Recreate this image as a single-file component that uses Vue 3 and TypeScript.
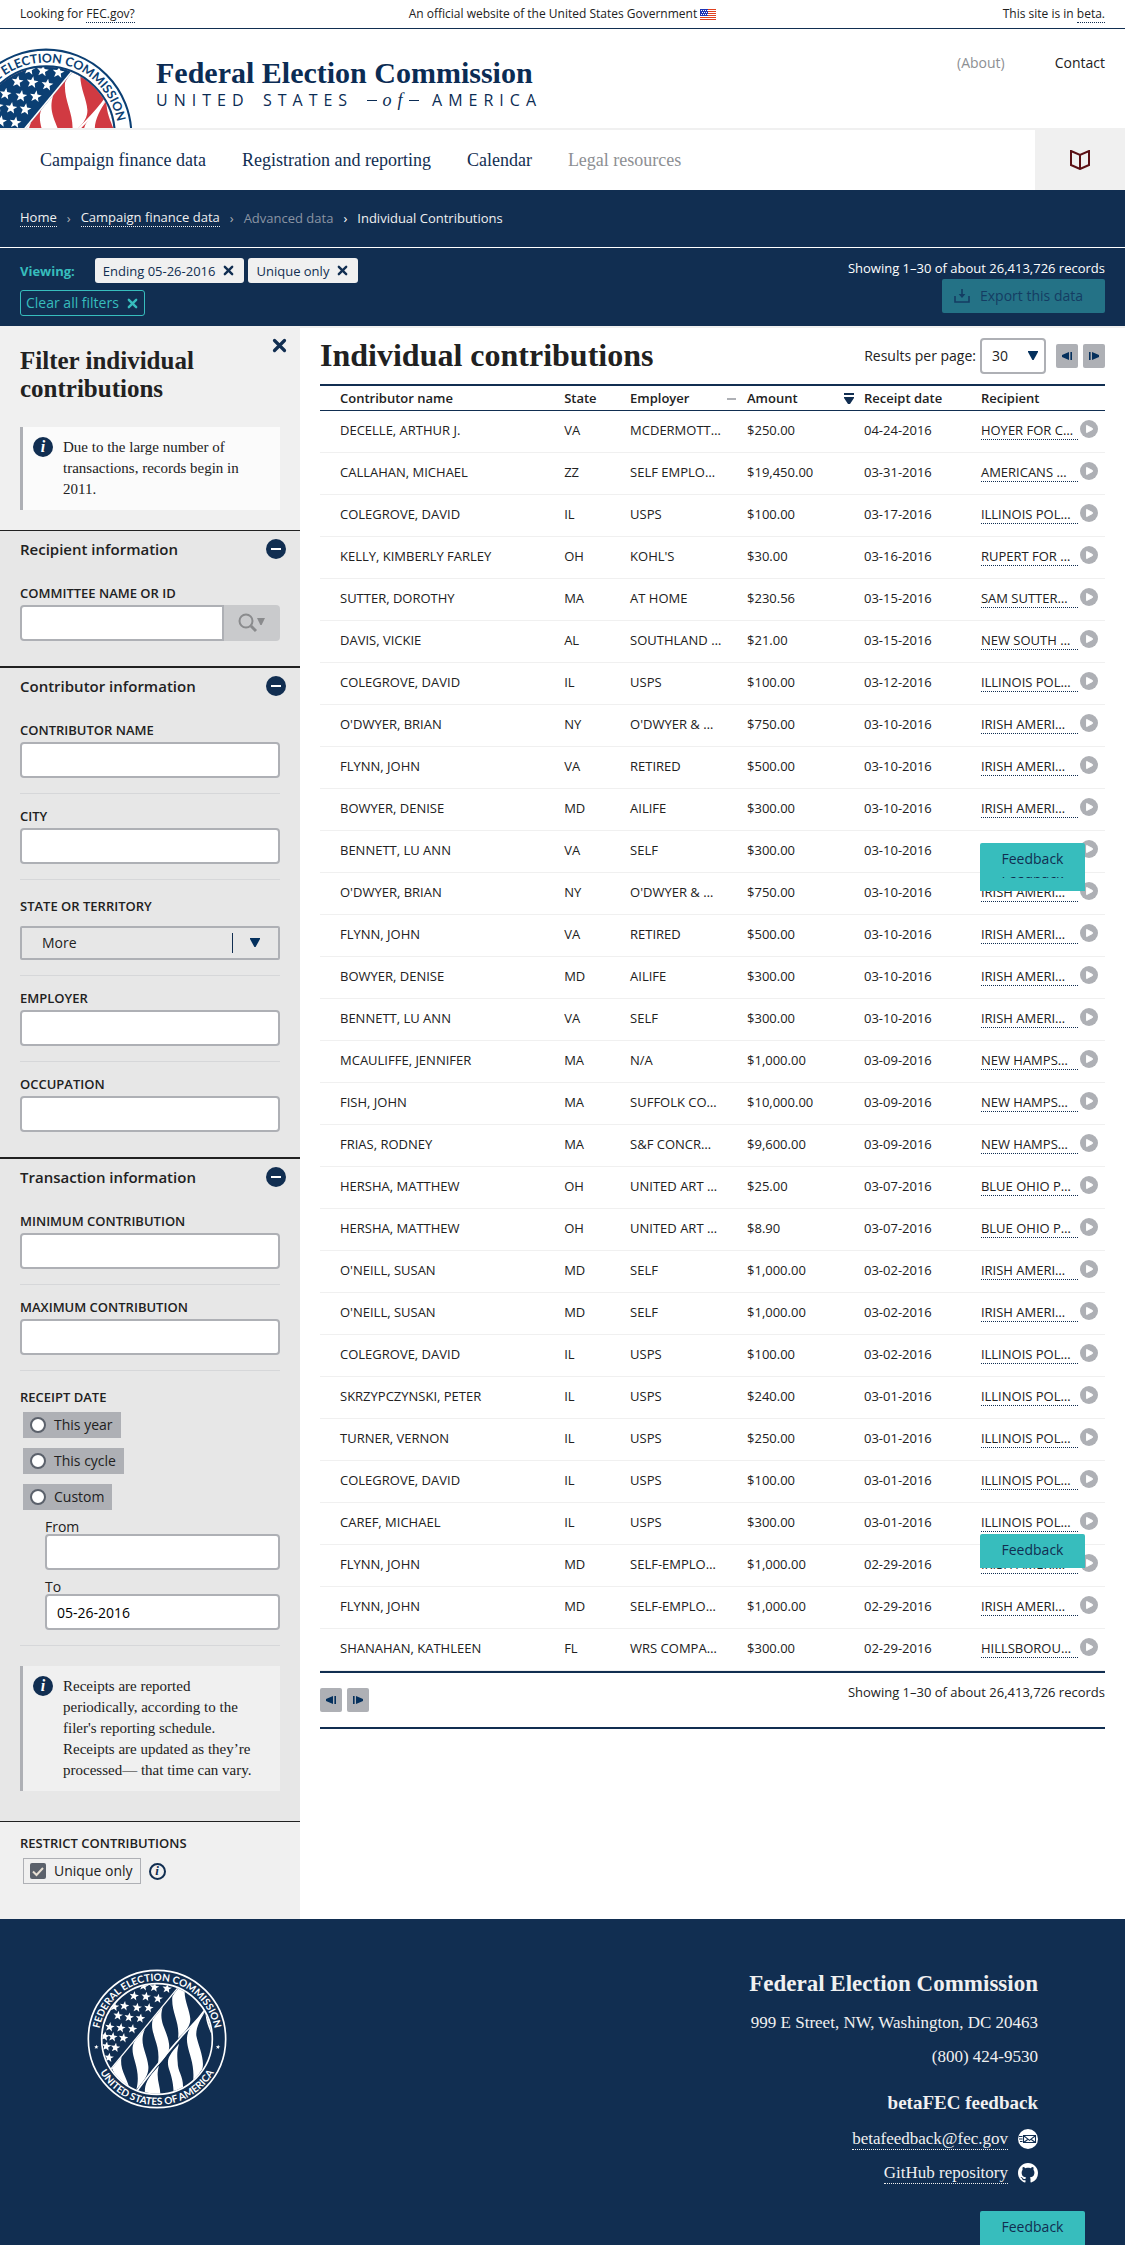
<script setup lang="ts">
import { ref } from 'vue'

interface Receipt {
  name: string
  state: string
  employer: string
  amount: string
  date: string
  recipient: string
}

const raw: string[][] = [
  ['DECELLE, ARTHUR J.', 'VA', 'MCDERMOTT…', '$250.00', '04-24-2016', 'HOYER FOR C…'],
  ['CALLAHAN, MICHAEL', 'ZZ', 'SELF EMPLO…', '$19,450.00', '03-31-2016', 'AMERICANS …'],
  ['COLEGROVE, DAVID', 'IL', 'USPS', '$100.00', '03-17-2016', 'ILLINOIS POL…'],
  ['KELLY, KIMBERLY FARLEY', 'OH', "KOHL'S", '$30.00', '03-16-2016', 'RUPERT FOR …'],
  ['SUTTER, DOROTHY', 'MA', 'AT HOME', '$230.56', '03-15-2016', 'SAM SUTTER…'],
  ['DAVIS, VICKIE', 'AL', 'SOUTHLAND …', '$21.00', '03-15-2016', 'NEW SOUTH …'],
  ['COLEGROVE, DAVID', 'IL', 'USPS', '$100.00', '03-12-2016', 'ILLINOIS POL…'],
  ["O'DWYER, BRIAN", 'NY', "O'DWYER & …", '$750.00', '03-10-2016', 'IRISH AMERI…'],
  ['FLYNN, JOHN', 'VA', 'RETIRED', '$500.00', '03-10-2016', 'IRISH AMERI…'],
  ['BOWYER, DENISE', 'MD', 'AILIFE', '$300.00', '03-10-2016', 'IRISH AMERI…'],
  ['BENNETT, LU ANN', 'VA', 'SELF', '$300.00', '03-10-2016', 'IRISH AMERI…'],
  ["O'DWYER, BRIAN", 'NY', "O'DWYER & …", '$750.00', '03-10-2016', 'IRISH AMERI…'],
  ['FLYNN, JOHN', 'VA', 'RETIRED', '$500.00', '03-10-2016', 'IRISH AMERI…'],
  ['BOWYER, DENISE', 'MD', 'AILIFE', '$300.00', '03-10-2016', 'IRISH AMERI…'],
  ['BENNETT, LU ANN', 'VA', 'SELF', '$300.00', '03-10-2016', 'IRISH AMERI…'],
  ['MCAULIFFE, JENNIFER', 'MA', 'N/A', '$1,000.00', '03-09-2016', 'NEW HAMPS…'],
  ['FISH, JOHN', 'MA', 'SUFFOLK CO…', '$10,000.00', '03-09-2016', 'NEW HAMPS…'],
  ['FRIAS, RODNEY', 'MA', 'S&F CONCR…', '$9,600.00', '03-09-2016', 'NEW HAMPS…'],
  ['HERSHA, MATTHEW', 'OH', 'UNITED ART …', '$25.00', '03-07-2016', 'BLUE OHIO P…'],
  ['HERSHA, MATTHEW', 'OH', 'UNITED ART …', '$8.90', '03-07-2016', 'BLUE OHIO P…'],
  ["O'NEILL, SUSAN", 'MD', 'SELF', '$1,000.00', '03-02-2016', 'IRISH AMERI…'],
  ["O'NEILL, SUSAN", 'MD', 'SELF', '$1,000.00', '03-02-2016', 'IRISH AMERI…'],
  ['COLEGROVE, DAVID', 'IL', 'USPS', '$100.00', '03-02-2016', 'ILLINOIS POL…'],
  ['SKRZYPCZYNSKI, PETER', 'IL', 'USPS', '$240.00', '03-01-2016', 'ILLINOIS POL…'],
  ['TURNER, VERNON', 'IL', 'USPS', '$250.00', '03-01-2016', 'ILLINOIS POL…'],
  ['COLEGROVE, DAVID', 'IL', 'USPS', '$100.00', '03-01-2016', 'ILLINOIS POL…'],
  ['CAREF, MICHAEL', 'IL', 'USPS', '$300.00', '03-01-2016', 'ILLINOIS POL…'],
  ['FLYNN, JOHN', 'MD', 'SELF-EMPLO…', '$1,000.00', '02-29-2016', 'IRISH AMERI…'],
  ['FLYNN, JOHN', 'MD', 'SELF-EMPLO…', '$1,000.00', '02-29-2016', 'IRISH AMERI…'],
  ['SHANAHAN, KATHLEEN', 'FL', 'WRS COMPA…', '$300.00', '02-29-2016', 'HILLSBOROU…'],
]

const receipts: Receipt[] = raw.map(([name, state, employer, amount, date, recipient]) => ({
  name, state, employer, amount, date, recipient,
}))

const activeFilters = ['Ending 05-26-2016', 'Unique only']
const periods = ['This year', 'This cycle', 'Custom']
const period = ref('')
const perPage = ref('30')
const dateTo = ref('05-26-2016')
const uniqueOnly = ref(true)

const starCentres: [number, number][] = [
  [-40, -159], [-8, -155], [30, -151], [-69, -129], [-33, -127], [3, -121],
  [-98, -99], [-60, -94], [-25, -93], [-117, -70], [-84, -65], [-50, -62],
  [-142, -36], [-109, -33], [-74, -30], [-133, -6], [-101, -3], [-157, -8],
  [-125, 26], [-152, 22], [-144, 56], [-128, -97],
]

function star(cx: number, cy: number, r: number): string {
  return Array.from({ length: 10 }, (_, i) => {
    const a = (Math.PI / 5) * i - Math.PI / 2 + 0.15
    const k = i % 2 ? r * 0.42 : r
    return `${(cx + k * Math.cos(a)).toFixed(1)},${(cy + k * Math.sin(a)).toFixed(1)}`
  }).join(' ')
}

const seals = [
  { id: 'head', ink: '#0b3f73', field: '#d13a42', canton: '#0b3f73', paper: '#ffffff' },
  { id: 'foot', ink: '#ffffff', field: '#112e51', canton: '#112e51', paper: '#112e51' },
]
</script>

<template>
  <div class="page">
    <!-- artwork shared by several parts of the page -->
    <svg class="defs" aria-hidden="true">
      <defs>
        <clipPath id="disc"><circle r="164" /></clipPath>
        <path id="arc-top" d="M-175 0A175 175 0 1 1 175 0" />
        <path id="arc-bottom" d="M-198 0A198 198 0 0 0 198 0" />
      </defs>
      <symbol v-for="s in seals" :id="`seal-${s.id}`" :key="s.id" viewBox="-210 -210 420 420">
        <circle r="206" :fill="s.paper" :stroke="s.ink" stroke-width="5" />
        <g clip-path="url(#disc)">
          <rect x="-170" y="-170" width="340" height="340" :fill="s.field" />
          <g fill="#fff">
            <path d="M46 -127Q58 -150 66 -160L84 -156C78 -120 98 -90 100 -60C100 -36 84 -22 63 -2C70 -50 42 -80 46 -127Z" />
            <path d="M18 -98C-24 -62 -18 -40 -6 0C2 24 8 46 2 80C26 54 40 40 36 14C30 -30 2 -50 18 -98Z" />
            <path d="M-36 -30C-80 10 -78 28 -66 68C-58 96 -54 120 -62 152C-36 122 -24 106 -26 82C-30 40 -56 14 -36 -30Z" />
            <path d="M-106 50L-136 86L-112 140L-82 150C-92 110 -114 90 -106 50Z" />
            <path d="M146 -84C96 -36 84 -20 92 20C98 50 114 80 108 130L136 90C144 60 124 20 118 -10C116 -34 130 -60 146 -84Z" />
            <path d="M66 14C30 54 28 66 38 96C46 120 50 140 50 170L78 150C80 110 62 100 62 70C60 46 60 36 66 14Z" />
            <path d="M6 80C-36 124 -38 140 -36 172L10 172C12 140 -6 120 6 80Z" />
            <path d="M124 -110L146 -86C144 -40 168 -20 168 10L172 -60L140 -130Z" />
          </g>
          <path d="M146 -90C110 -40 90 -30 60 8C20 54 -20 100 -60 156" fill="none" stroke="#fff" stroke-width="5" />
          <path d="M68 -157L-140 94L-200 94L-200 -200L68 -200Z" :fill="s.canton" />
          <path d="M68 -160L-140 92" stroke="#fff" stroke-width="4" />
          <polygon v-for="([x, y], i) in starCentres" :key="i" :points="star(x, y, 15)" fill="#fff" />
        </g>
        <circle r="166" fill="none" :stroke="s.ink" stroke-width="5" />
        <polygon :points="star(-182, 24, 7)" :fill="s.ink" />
        <polygon :points="star(183, 24, 7)" :fill="s.ink" />
      </symbol>
      <symbol id="cross" viewBox="0 0 12 12">
        <path d="M2 2L10 10M10 2L2 10" stroke="currentColor" stroke-width="2.6" stroke-linecap="round" />
      </symbol>
      <symbol id="down" viewBox="0 0 10 9"><path d="M0 0H10V1L5.6 9H4.4L0 1Z" fill="currentColor" /></symbol>
      <symbol id="prev" viewBox="0 0 10 8">
        <path d="M7 0V8L0 5V3ZM8.4 0H10V8H8.4Z" fill="currentColor" />
      </symbol>
      <symbol id="next" viewBox="0 0 10 8">
        <path d="M3 0V8L10 5V3ZM0 0H1.6V8H0Z" fill="currentColor" />
      </symbol>
    </svg>

    <div class="disclaimer">
      <span>Looking for <a href="#">FEC.gov?</a></span>
      <span class="official">
        An official website of the United States Government
        <svg class="flag" viewBox="0 0 16 11" aria-hidden="true">
          <rect width="16" height="11" fill="#fff" />
          <path d="M0 .5H16M0 2.5H16M0 4.5H16M0 6.5H16M0 8.5H16M0 10.5H16" stroke="#e0401f" />
          <rect width="8" height="7" fill="#1f35b5" />
          <path d="M1 1.5H8M2 3.5H8M1 5.5H8" stroke="#fff" stroke-dasharray="1 1" />
        </svg>
      </span>
      <span>This site is in <a href="#">beta.</a></span>
    </div>

    <header class="masthead">
      <svg class="seal" viewBox="-210 -210 420 420" aria-hidden="true">
        <use href="#seal-head" x="-210" y="-210" width="420" height="420" />
        <text><textPath href="#arc-top" startOffset="50%">FEDERAL ELECTION COMMISSION</textPath></text>
      </svg>
      <a class="wordmark" href="#">
        <span class="wordmark-name">Federal Election Commission</span>
        <span class="wordmark-sub">
          <span>UNITED</span><span>STATES</span>
          <span class="of"><i class="dash"></i><em>of</em><i class="dash"></i></span>
          <span>AMERICA</span>
        </span>
      </a>
      <nav class="utility">
        <span class="muted">(About)</span>
        <a href="#">Contact</a>
      </nav>
    </header>

    <nav class="site-nav">
      <ul>
        <li><a href="#">Campaign finance data</a></li>
        <li><a href="#">Registration and reporting</a></li>
        <li><a href="#">Calendar</a></li>
        <li class="muted">Legal resources</li>
      </ul>
      <button class="glossary" aria-label="Glossary">
        <svg viewBox="0 0 20 20" aria-hidden="true">
          <path d="M1 1L10 5L19 1V15L10 19L1 15ZM10 5V19" fill="none" stroke="#5b0f14" stroke-width="2" />
        </svg>
      </button>
    </nav>

    <nav class="crumbs">
      <a href="#">Home</a><span class="sep">›</span>
      <a href="#">Campaign finance data</a><span class="sep">›</span>
      <span class="faded">Advanced data</span><span class="sep bright">›</span>
      <span>Individual Contributions</span>
    </nav>

    <section class="viewing">
      <div class="tags">
        <div class="tag-row">
          <strong>Viewing:</strong>
          <ul>
            <li v-for="f in activeFilters" :key="f" class="tag">
              {{ f }}
              <button :aria-label="`Remove ${f}`"><svg class="x"><use href="#cross" /></svg></button>
            </li>
          </ul>
        </div>
        <button class="clear">Clear all filters <svg class="x"><use href="#cross" /></svg></button>
      </div>
      <div class="results">
        <span>Showing 1–30 of about 26,413,726 records</span>
        <button class="export">
          <svg viewBox="0 0 16 14" aria-hidden="true">
            <path d="M1 7V13H15V7" fill="none" stroke="currentColor" stroke-width="1.6" />
            <path d="M8 0V6" stroke="currentColor" stroke-width="1.6" />
            <path d="M4.6 5H11.4L8 9Z" fill="currentColor" />
          </svg>
          Export this data
        </button>
      </div>
    </section>

    <div class="body">
      <aside class="filters">
        <div class="filters-head">
          <h2>Filter individual contributions</h2>
          <button class="close" aria-label="Hide filters"><svg><use href="#cross" /></svg></button>
          <div class="note light">
            <span class="info">i</span>
            <p>Due to the large number of transactions, records begin in 2011.</p>
          </div>
        </div>

        <section class="panel first">
          <h3>Recipient information <button class="toggle" aria-label="Collapse"></button></h3>
          <div class="field">
            <label for="committee">COMMITTEE NAME OR ID</label>
            <div class="combo">
              <input id="committee" type="text" />
              <button aria-label="Search">
                <svg viewBox="0 0 28 20" aria-hidden="true">
                  <circle cx="8" cy="8" r="6.5" fill="none" stroke="#8a8b8d" stroke-width="2" />
                  <path d="M13 13L18 18" stroke="#8a8b8d" stroke-width="3" />
                  <path d="M19 5H27L23.6 12H22.4Z" fill="#8a8b8d" />
                </svg>
              </button>
            </div>
          </div>
        </section>

        <section class="panel">
          <h3>Contributor information <button class="toggle" aria-label="Collapse"></button></h3>
          <div class="field"><label for="contributor">CONTRIBUTOR NAME</label><input id="contributor" type="text" /></div>
          <div class="field"><label for="city">CITY</label><input id="city" type="text" /></div>
          <div class="field group">
            <label for="state">STATE OR TERRITORY</label>
            <div class="dropdown">
              <select id="state"><option>More</option></select>
              <svg class="arrow"><use href="#down" /></svg>
            </div>
          </div>
          <div class="field"><label for="employer">EMPLOYER</label><input id="employer" type="text" /></div>
          <div class="field"><label for="occupation">OCCUPATION</label><input id="occupation" type="text" /></div>
        </section>

        <section class="panel">
          <h3>Transaction information <button class="toggle" aria-label="Collapse"></button></h3>
          <div class="field"><label for="min">MINIMUM CONTRIBUTION</label><input id="min" type="text" /></div>
          <div class="field"><label for="max">MAXIMUM CONTRIBUTION</label><input id="max" type="text" /></div>
          <fieldset class="field group dates">
            <legend>RECEIPT DATE</legend>
            <div class="radios">
              <label v-for="p in periods" :key="p" class="chip solid">
                <input v-model="period" type="radio" name="period" :value="p" />{{ p }}
              </label>
            </div>
            <div class="range">
              <label for="from">From</label><input id="from" type="text" />
              <label for="to">To</label><input id="to" v-model="dateTo" type="text" />
            </div>
          </fieldset>
          <div class="note grey">
            <span class="info">i</span>
            <p>Receipts are reported periodically, according to the filer's reporting schedule. Receipts are updated as they’re processed— that time can vary.</p>
          </div>
        </section>

        <fieldset class="restrict">
          <legend>RESTRICT CONTRIBUTIONS</legend>
          <div class="restrict-row">
            <label class="chip">
              <span class="tick">
                <input v-model="uniqueOnly" type="checkbox" />
                <svg viewBox="0 0 16 16" aria-hidden="true"><path d="M3 8.5L6.5 12L13 5" fill="none" stroke="#e8e0d4" stroke-width="2" /></svg>
              </span>
              Unique only
            </label>
            <button class="info outline" aria-label="About unique contributions">i</button>
          </div>
        </fieldset>
      </aside>

      <main class="data">
        <div class="data-head">
          <h1>Individual contributions</h1>
          <div class="paging">
            <label for="per-page">Results per page:</label>
            <div class="per-page">
              <select id="per-page" v-model="perPage"><option>30</option><option>50</option><option>100</option></select>
              <svg class="arrow"><use href="#down" /></svg>
            </div>
            <div class="pager">
              <button aria-label="Previous page"><svg><use href="#prev" /></svg></button>
              <button aria-label="Next page"><svg><use href="#next" /></svg></button>
            </div>
          </div>
        </div>

        <table>
          <colgroup>
            <col class="c-name" /><col class="c-state" /><col class="c-mid" /><col class="c-mid" /><col class="c-mid" /><col />
          </colgroup>
          <thead>
            <tr>
              <th>Contributor name</th>
              <th>State</th>
              <th>Employer</th>
              <th><i class="unsorted"></i>Amount</th>
              <th>
                <svg class="sorted" viewBox="0 0 10 11" aria-hidden="true">
                  <path d="M0 0H10V2H0ZM0 4H10V5L6 11H4L0 5Z" fill="#112e51" />
                </svg>Receipt date
              </th>
              <th>Recipient</th>
            </tr>
          </thead>
          <tbody>
            <tr v-for="(r, i) in receipts" :key="i">
              <td>{{ r.name }}</td>
              <td>{{ r.state }}</td>
              <td>{{ r.employer }}</td>
              <td>{{ r.amount }}</td>
              <td>{{ r.date }}</td>
              <td>
                <div class="recipient">
                  <a href="#">{{ r.recipient }}</a>
                  <button aria-label="Details">
                    <svg viewBox="0 0 18 18" aria-hidden="true">
                      <circle cx="9" cy="9" r="9" fill="#aeb0b5" />
                      <path d="M6.6 5.4L12.4 8.4V9.6L6.6 12.6Z" fill="#fff" stroke="#fff" stroke-linejoin="round" />
                    </svg>
                  </button>
                </div>
              </td>
            </tr>
          </tbody>
        </table>

        <div class="data-foot">
          <div class="pager">
            <button aria-label="Previous page"><svg><use href="#prev" /></svg></button>
            <button aria-label="Next page"><svg><use href="#next" /></svg></button>
          </div>
          <span>Showing 1–30 of about 26,413,726 records</span>
        </div>
      </main>
    </div>

    <footer class="footer">
      <svg class="seal" viewBox="-210 -210 420 420" aria-hidden="true">
        <use href="#seal-foot" x="-210" y="-210" width="420" height="420" />
        <text><textPath href="#arc-top" startOffset="50%">FEDERAL ELECTION COMMISSION</textPath></text>
        <text><textPath href="#arc-bottom" startOffset="50%">UNITED STATES OF AMERICA</textPath></text>
      </svg>
      <div class="contact">
        <h2>Federal Election Commission</h2>
        <p>999 E Street, NW, Washington, DC 20463</p>
        <p>(800) 424-9530</p>
        <h3>betaFEC feedback</h3>
        <p class="with-icon">
          <a href="#">betafeedback@fec.gov</a>
          <svg viewBox="0 0 20 20" aria-hidden="true">
            <circle cx="10" cy="10" r="10" fill="#fff" />
            <path d="M5.5 6.5H17.5V13.5H5.5ZM6 7L11.5 11.4L17 7M6 13.2L10 10.2M17 13.2L13 10.2M1 7.5H4.5M1 10H4.5M2 12.5H4.5" fill="none" stroke="#112e51" stroke-width="1.1" />
          </svg>
        </p>
        <p class="with-icon">
          <a href="#">GitHub repository</a>
          <svg viewBox="0 0 16 16" aria-hidden="true">
            <path fill="#fff" d="M8 0C3.58 0 0 3.58 0 8c0 3.54 2.29 6.53 5.47 7.59.4.07.55-.17.55-.38 0-.19-.01-.82-.01-1.49-2.01.37-2.53-.49-2.69-.94-.09-.23-.48-.94-.82-1.13-.28-.15-.68-.52-.01-.53.63-.01 1.08.58 1.23.82.72 1.21 1.87.87 2.33.66.07-.52.28-.87.51-1.07-1.78-.2-3.64-.89-3.64-3.95 0-.87.31-1.59.82-2.15-.08-.2-.36-1.02.08-2.12 0 0 .67-.21 2.2.82.64-.18 1.32-.27 2-.27s1.36.09 2 .27c1.53-1.04 2.2-.82 2.2-.82.44 1.1.16 1.92.08 2.12.51.56.82 1.27.82 2.15 0 3.07-1.87 3.75-3.65 3.95.29.25.54.73.54 1.48 0 1.07-.01 1.93-.01 2.2 0 .21.15.46.55.38A8.01 8.01 0 0 0 16 8c0-4.42-3.58-8-8-8z" />
          </svg>
        </p>
      </div>
    </footer>

    <button class="feedback lower">Feedback</button>
    <button class="feedback upper">Feedback</button>
    <button class="feedback middle">Feedback</button>
    <button class="feedback docked">Feedback</button>
  </div>
</template>

<style>
body {
  margin: 0;
}
</style>

<style scoped>
.page {
  --navy: #112e51;
  --teal: #37bdbd;
  --line: #aeb0b5;
  --serif: "Liberation Serif", "Times New Roman", serif;
  position: relative;
  background: #fff;
  color: #212121;
  font-family: "Open Sans", "Noto Sans", sans-serif;
  font-size: 13px;
  line-height: 20px;
}
.page *,
.page *::before,
.page *::after {
  box-sizing: border-box;
}
.defs {
  position: absolute;
  width: 0;
  height: 0;
}
h1, h2, h3, p, ul, fieldset {
  margin: 0;
  padding: 0;
  border: 0;
  list-style: none;
}
button, input, select {
  font: inherit;
  color: inherit;
  margin: 0;
  padding: 0;
  border: 0;
  background: none;
}
button svg {
  display: block;
}
a {
  color: inherit;
  text-decoration: none;
}
fieldset {
  min-width: 0;
}
.muted {
  color: #8d8f93;
}
.seal text {
  fill: #0b3f73;
  font: 700 30px Lato, sans-serif;
  text-anchor: middle;
}
.footer .seal text {
  fill: #fff;
}

.disclaimer {
  display: flex;
  justify-content: space-between;
  height: 29px;
  padding: 4px 20px 0;
  border-bottom: 1px solid var(--navy);
  font-size: 12px;
}
.disclaimer > span {
  flex: 1;
}
.disclaimer > span:last-child {
  text-align: right;
}
.disclaimer .official {
  flex: none;
}
.disclaimer a {
  border-bottom: 1px dotted var(--navy);
}
.flag {
  width: 16px;
  height: 11px;
  vertical-align: -2px;
}

.masthead {
  display: flex;
  align-items: flex-start;
  height: 99px;
  padding-right: 20px;
  overflow: hidden;
}
.masthead .seal {
  flex: none;
  width: 174px;
  height: 174px;
  margin: 19px 23px 0 -41px;
}
.wordmark {
  width: 380px;
  padding-top: 26px;
  color: #0b2c54;
}
.wordmark-name {
  display: block;
  font: 700 30px/36px var(--serif);
  white-space: nowrap;
}
.wordmark-sub {
  display: flex;
  justify-content: space-between;
  margin-right: -6px;
  font-size: 16px;
  line-height: 18px;
  letter-spacing: 6px;
}
.of {
  display: flex;
  align-items: center;
  gap: 6px;
}
.of em {
  font: italic 18px/18px var(--serif);
  letter-spacing: 6px;
  margin-right: -6px;
}
.dash {
  width: 10px;
  height: 1px;
  background: currentColor;
}
.utility {
  display: flex;
  gap: 50px;
  margin-left: auto;
  padding-top: 24px;
  font-size: 14px;
}

.site-nav {
  display: flex;
  justify-content: space-between;
  height: 62px;
  border-top: 2px solid #f0f0f0;
  color: var(--navy);
}
.site-nav ul {
  display: flex;
  gap: 36px;
  padding-left: 40px;
  font: 18px/60px var(--serif);
}
.glossary {
  display: grid;
  place-items: center;
  width: 90px;
  background: #f0f0f0;
}
.glossary svg {
  width: 20px;
  height: 20px;
}

.crumbs {
  display: flex;
  align-items: center;
  height: 58px;
  padding: 0 20px 2px;
  border-bottom: 1px solid #fff;
  background: var(--navy);
  color: #f0f0f0;
}
.crumbs a {
  line-height: 18px;
  border-bottom: 1px dotted #f0f0f0;
}
.crumbs .sep {
  padding: 0 10px;
  color: var(--line);
}
.crumbs .bright {
  color: #fff;
}
.crumbs .faded {
  color: #8a94a3;
}

.viewing {
  display: flex;
  justify-content: space-between;
  min-height: 78px;
  padding: 10px 20px;
  background: var(--navy);
}
.tags {
  display: flex;
  flex-direction: column;
  align-items: flex-start;
  gap: 7px;
}
.tag-row {
  display: flex;
  align-items: center;
  gap: 20px;
}
.tag-row ul {
  display: flex;
  gap: 4px;
}
.tag-row strong {
  color: var(--teal);
}
.tag {
  display: flex;
  align-items: center;
  gap: 8px;
  height: 25px;
  padding: 0 10px 0 8px;
  border-radius: 3px;
  background: #f0f0f0;
  color: var(--navy);
}
.x {
  width: 11px;
  height: 11px;
}
.clear {
  display: flex;
  align-items: center;
  gap: 8px;
  height: 26px;
  padding: 0 6px 0 5px;
  border: 1px solid var(--teal);
  border-radius: 3px;
  color: var(--teal);
  font-size: 14px;
}
.results {
  display: flex;
  flex-direction: column;
  align-items: flex-end;
  gap: 1px;
  color: #fff;
}
.export {
  display: flex;
  align-items: center;
  gap: 10px;
  height: 34px;
  padding: 0 22px 0 12px;
  border-radius: 2px;
  background: #247286;
  color: #143d63;
  font-size: 14px;
}
.export svg {
  width: 16px;
  height: 14px;
}

.body {
  display: flex;
  align-items: stretch;
  border-top: 2px solid #f0f0f0;
}
.filters {
  flex: none;
  width: 300px;
  background: #f0f0f0;
}
.filters-head {
  position: relative;
  padding: 19px 20px 20px;
}
.filters-head h2 {
  margin-bottom: 24px;
  padding-right: 40px;
  font: 700 25px/28px var(--serif);
}
.close {
  position: absolute;
  top: 10px;
  right: 13px;
  color: var(--navy);
}
.close svg {
  width: 15px;
  height: 15px;
}
.note {
  display: flex;
  gap: 10px;
  padding: 10px 20px 10px 10px;
  border-left: 3px solid var(--line);
}
.note p {
  font: 15px/21px var(--serif);
}
.note.light {
  background: #fbfbfb;
}
.note.grey {
  margin-top: 20px;
  background: #f0f0f0;
}
.info {
  flex: none;
  width: 20px;
  height: 20px;
  border-radius: 50%;
  background: var(--navy);
  color: #fff;
  font: italic 700 16px/19px var(--serif);
  text-align: center;
}
.info.outline {
  width: 17px;
  height: 17px;
  border: 2px solid var(--navy);
  background: none;
  color: var(--navy);
  font-size: 13px;
  line-height: 12px;
}
.panel {
  padding: 0 20px 25px;
  border-top: 2px solid #212121;
  background: #e7e7e7;
}
.panel.first {
  border-top-width: 1px;
}
.panel:has(.note) {
  padding-bottom: 30px;
}
.panel h3 {
  display: flex;
  align-items: center;
  justify-content: space-between;
  height: 36px;
  margin: 0 -6px 4px 0;
  font-size: 15px;
  font-weight: 600;
}
.toggle {
  display: grid;
  place-items: center;
  width: 20px;
  height: 20px;
  border-radius: 50%;
  background: var(--navy);
}
.toggle::after {
  content: "";
  width: 10px;
  height: 2px;
  background: #fff;
}
.field {
  padding: 10px 0 15px;
  border-bottom: 1px solid #d6d7d9;
}
.field:last-child {
  padding-bottom: 0;
  border-bottom: 0;
}
.field > label,
legend {
  display: block;
  padding: 0;
  font-weight: 600;
  line-height: 24px;
}
.field input[type="text"] {
  display: block;
  width: 100%;
  height: 36px;
  padding: 0 10px;
  border: 2px solid var(--line);
  border-radius: 4px;
  background: #fff;
  color: #000;
  font-size: 14px;
}
.field.group {
  padding-top: 14px;
}
.combo {
  display: flex;
}
.field .combo input[type="text"] {
  flex: 1;
  width: auto;
  min-width: 0;
  border-radius: 4px 0 0 4px;
}
.combo button {
  display: grid;
  place-items: center;
  width: 56px;
  border-radius: 0 4px 4px 0;
  background: #c9cacc;
}
.combo svg {
  width: 28px;
  height: 20px;
}
.dropdown {
  position: relative;
  margin-top: 8px;
}
.dropdown select,
.per-page select {
  appearance: none;
  width: 100%;
  height: 34px;
  padding: 0 20px;
  border: 2px solid var(--line);
  border-radius: 2px;
  font-size: 14px;
}
.dropdown::after {
  content: "";
  position: absolute;
  top: 7px;
  right: 47px;
  width: 1px;
  height: 20px;
  background: var(--navy);
}
.arrow {
  position: absolute;
  width: 10px;
  height: 9px;
  color: #04305d;
  pointer-events: none;
}
.dropdown .arrow {
  top: 12px;
  right: 20px;
}
.radios {
  display: flex;
  flex-direction: column;
  align-items: flex-start;
  gap: 10px;
  padding: 3px 0 0 3px;
}
.chip {
  display: flex;
  align-items: center;
  gap: 8px;
  height: 26px;
  padding: 0 7px 0 6px;
  border: 1px solid var(--line);
  font-size: 14px;
}
.chip.solid {
  background: var(--line);
}
.chip input {
  appearance: none;
  display: block;
  width: 16px;
  height: 16px;
}
.chip input[type="radio"] {
  border: 2px solid #5b616b;
  border-radius: 50%;
  background: #fff;
}
.range {
  padding: 0 0 0 25px;
}
.range label {
  display: block;
  margin-top: 10px;
  font-size: 14px;
  line-height: 14px;
}
.tick {
  position: relative;
  border-radius: 2px;
  background: #5b616b;
}
.tick svg {
  position: absolute;
  inset: 0;
}
.restrict {
  padding: 0 20px 35px;
  border-top: 1px solid #212121;
}
.restrict legend {
  float: left;
  width: 100%;
  padding-top: 9px;
}
.dates legend {
  float: left;
  width: 100%;
}
.radios,
.restrict-row {
  clear: both;
}
.restrict-row {
  display: flex;
  align-items: center;
  gap: 8px;
  padding: 3px 0 0 3px;
}

.data {
  flex: 1;
  min-width: 0;
  padding: 0 20px;
}
.data-head {
  display: flex;
  align-items: center;
  justify-content: space-between;
  height: 56px;
}
.data-head h1 {
  padding-bottom: 3px;
  font: 700 32px/36px var(--serif);
}
.paging {
  display: flex;
  align-items: center;
  font-size: 14px;
}
.per-page {
  position: relative;
  width: 66px;
  margin: 0 10px 0 4px;
}
.per-page select {
  display: block;
  height: 36px;
  padding: 0 10px;
  border-radius: 4px;
  background: #fff;
}
.per-page .arrow {
  top: 13px;
  right: 8px;
}
.pager {
  display: flex;
  gap: 5px;
}
.pager button {
  display: grid;
  place-items: center;
  width: 22px;
  height: 24px;
  border-radius: 2px;
  background: var(--line);
  color: #04305d;
}
.pager svg {
  width: 10px;
  height: 8px;
}

table {
  width: 100%;
  table-layout: fixed;
  border-spacing: 0;
  border-top: 2px solid var(--navy);
  border-bottom: 2px solid var(--navy);
}
.c-name {
  width: 31.1%;
}
.c-state {
  width: 8.4%;
}
.c-mid {
  width: 14.9%;
}
th {
  position: relative;
  height: 25px;
  padding: 0;
  border-bottom: 1px solid var(--navy);
  font-weight: 600;
  text-align: left;
  white-space: nowrap;
}
td {
  height: 42px;
  padding: 0 0 3px;
  border-bottom: 1px solid #f0f0f0;
  white-space: nowrap;
}
th:first-child,
td:first-child {
  padding-left: 20px;
}
.unsorted {
  position: absolute;
  top: 12px;
  left: -20px;
  width: 9px;
  height: 2px;
  background: var(--line);
}
.sorted {
  position: absolute;
  top: 7px;
  left: -20px;
  width: 10px;
  height: 11px;
}
.recipient {
  display: flex;
  align-items: center;
  gap: 2px;
}
.recipient a {
  width: 97px;
  line-height: 18px;
  border-bottom: 1px dotted var(--navy);
}
.recipient button {
  width: 18px;
  height: 18px;
  margin-bottom: 2px;
}
.data-foot {
  display: flex;
  align-items: flex-start;
  justify-content: space-between;
  height: 56px;
  padding-top: 9px;
  border-bottom: 2px solid var(--navy);
}
.data-foot .pager {
  padding-top: 6px;
}

.footer {
  display: flex;
  align-items: flex-start;
  justify-content: space-between;
  padding: 50px 87px 55px;
  background: var(--navy);
  color: #f0f0f0;
  font-family: var(--serif);
}
.footer .seal {
  width: 140px;
  height: 140px;
}
.contact {
  text-align: right;
}
.contact h2 {
  margin-bottom: 7px;
  font-size: 23px;
  line-height: 30px;
}
.contact p {
  font-size: 17px;
  line-height: 34px;
}
.contact h3 {
  margin: 14px 0 4px;
  font-size: 19px;
  line-height: 30px;
}
.with-icon {
  display: flex;
  align-items: center;
  justify-content: flex-end;
  gap: 10px;
  height: 34px;
}
.contact .with-icon a {
  line-height: 20px;
  border-bottom: 1px dotted #f0f0f0;
}
.with-icon svg {
  width: 20px;
  height: 20px;
}

.feedback {
  position: absolute;
  right: 40px;
  width: 105px;
  height: 34px;
  padding-bottom: 2px;
  border-radius: 2px 2px 0 0;
  background: var(--teal);
  color: var(--navy);
  font-size: 14px;
}
.feedback.upper {
  top: 843px;
}
.feedback.lower {
  top: 857px;
}
.feedback.middle {
  top: 1534px;
}
.feedback.docked {
  bottom: 0;
}
</style>
